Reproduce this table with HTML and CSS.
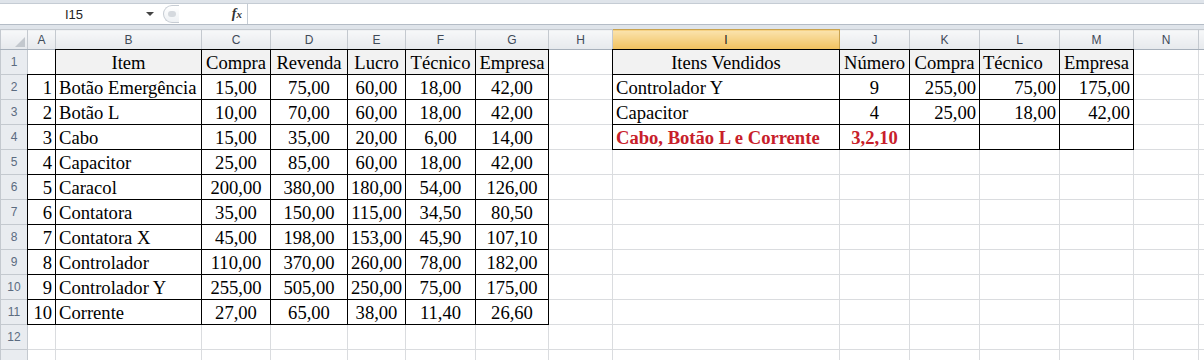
FILE: index.html
```html
<!DOCTYPE html>
<html lang="pt">
<head>
    <meta charset="UTF-8">
    <title>Vendas</title>
    <link rel="stylesheet" href="styles.css">
</head>
<body>

<div class="formula-bar">
    <div class="bar-row">
        <div class="name-box">
            <span class="ref">I15</span>
            <span class="drop"></span>
        </div>
        <div class="bar-tools">
            <span class="grip"><span class="dot"></span></span>
            <span class="fx"><i>f</i><i class="x">x</i></span>
        </div>
        <div class="formula"></div>
    </div>
</div>

<table class="sheet">
    <colgroup>
        <col style="width:27px">
        <col style="width:28px">
        <col style="width:146px">
        <col style="width:69px">
        <col style="width:77px">
        <col style="width:58px">
        <col style="width:70px">
        <col style="width:73px">
        <col style="width:64px">
        <col style="width:227px">
        <col style="width:70px">
        <col style="width:70px">
        <col style="width:80px">
        <col style="width:74px">
        <col style="width:65px">
        <col style="width:80px">
    </colgroup>
    <tr class="col-heads">
        <th class="corner"><svg width="12" height="12" viewBox="0 0 12 12"><polygon points="11,1 11,11 1,11" fill="#c3c8ce"/></svg></th>
        <th>A</th><th>B</th><th>C</th><th>D</th><th>E</th><th>F</th><th>G</th><th>H</th>
        <th class="active">I</th><th>J</th><th>K</th><th>L</th><th>M</th><th>N</th><th></th>
    </tr>
    <tr>
        <th class="row-num">1</th>
        <td></td>
        <td class="b hd c">Item</td>
        <td class="b hd c">Compra</td>
        <td class="b hd c">Revenda</td>
        <td class="b hd c">Lucro</td>
        <td class="b hd c">Técnico</td>
        <td class="b hd c">Empresa</td>
        <td></td>
        <td class="b hd c">Itens Vendidos</td>
        <td class="b hd c">Número</td>
        <td class="b hd c">Compra</td>
        <td class="b hd">Técnico</td>
        <td class="b hd c">Empresa</td>
        <td></td><td></td>
    </tr>
    <tr>
        <th class="row-num">2</th>
        <td class="b r">1</td><td class="b">Botão Emergência</td>
        <td class="b c">15,00</td><td class="b c">75,00</td><td class="b c">60,00</td><td class="b c">18,00</td><td class="b c">42,00</td>
        <td></td>
        <td class="b">Controlador Y</td><td class="b c">9</td>
        <td class="b r">255,00</td><td class="b r">75,00</td><td class="b r">175,00</td>
        <td></td><td></td>
    </tr>
    <tr>
        <th class="row-num">3</th>
        <td class="b r">2</td><td class="b">Botão L</td>
        <td class="b c">10,00</td><td class="b c">70,00</td><td class="b c">60,00</td><td class="b c">18,00</td><td class="b c">42,00</td>
        <td></td>
        <td class="b">Capacitor</td><td class="b c">4</td>
        <td class="b r">25,00</td><td class="b r">18,00</td><td class="b r">42,00</td>
        <td></td><td></td>
    </tr>
    <tr>
        <th class="row-num">4</th>
        <td class="b r">3</td><td class="b">Cabo</td>
        <td class="b c">15,00</td><td class="b c">35,00</td><td class="b c">20,00</td><td class="b c">6,00</td><td class="b c">14,00</td>
        <td></td>
        <td class="b red">Cabo, Botão L e Corrente</td><td class="b c red">3,2,10</td>
        <td class="b"></td><td class="b"></td><td class="b"></td>
        <td></td><td></td>
    </tr>
    <tr>
        <th class="row-num">5</th>
        <td class="b r">4</td><td class="b">Capacitor</td>
        <td class="b c">25,00</td><td class="b c">85,00</td><td class="b c">60,00</td><td class="b c">18,00</td><td class="b c">42,00</td>
        <td></td><td></td><td></td><td></td><td></td><td></td><td></td><td></td>
    </tr>
    <tr>
        <th class="row-num">6</th>
        <td class="b r">5</td><td class="b">Caracol</td>
        <td class="b c">200,00</td><td class="b c">380,00</td><td class="b c">180,00</td><td class="b c">54,00</td><td class="b c">126,00</td>
        <td></td><td></td><td></td><td></td><td></td><td></td><td></td><td></td>
    </tr>
    <tr>
        <th class="row-num">7</th>
        <td class="b r">6</td><td class="b">Contatora</td>
        <td class="b c">35,00</td><td class="b c">150,00</td><td class="b c">115,00</td><td class="b c">34,50</td><td class="b c">80,50</td>
        <td></td><td></td><td></td><td></td><td></td><td></td><td></td><td></td>
    </tr>
    <tr>
        <th class="row-num">8</th>
        <td class="b r">7</td><td class="b">Contatora X</td>
        <td class="b c">45,00</td><td class="b c">198,00</td><td class="b c">153,00</td><td class="b c">45,90</td><td class="b c">107,10</td>
        <td></td><td></td><td></td><td></td><td></td><td></td><td></td><td></td>
    </tr>
    <tr>
        <th class="row-num">9</th>
        <td class="b r">8</td><td class="b">Controlador</td>
        <td class="b c">110,00</td><td class="b c">370,00</td><td class="b c">260,00</td><td class="b c">78,00</td><td class="b c">182,00</td>
        <td></td><td></td><td></td><td></td><td></td><td></td><td></td><td></td>
    </tr>
    <tr>
        <th class="row-num">10</th>
        <td class="b r">9</td><td class="b">Controlador Y</td>
        <td class="b c">255,00</td><td class="b c">505,00</td><td class="b c">250,00</td><td class="b c">75,00</td><td class="b c">175,00</td>
        <td></td><td></td><td></td><td></td><td></td><td></td><td></td><td></td>
    </tr>
    <tr>
        <th class="row-num">11</th>
        <td class="b r">10</td><td class="b">Corrente</td>
        <td class="b c">27,00</td><td class="b c">65,00</td><td class="b c">38,00</td><td class="b c">11,40</td><td class="b c">26,60</td>
        <td></td><td></td><td></td><td></td><td></td><td></td><td></td><td></td>
    </tr>
    <tr>
        <th class="row-num">12</th>
        <td></td><td></td><td></td><td></td><td></td><td></td><td></td><td></td><td></td><td></td><td></td><td></td><td></td><td></td><td></td>
    </tr>
    <tr>
        <th class="row-num"></th>
        <td></td><td></td><td></td><td></td><td></td><td></td><td></td><td></td><td></td><td></td><td></td><td></td><td></td><td></td><td></td>
    </tr>
</table>

</body>
</html>
```

FILE: styles.css
```css
* {
    box-sizing: border-box;
}
body {
    margin: 0;
    width: 1204px;
    height: 360px;
    overflow: hidden;
    background: #ffffff;
    font-family: "Liberation Serif", "DejaVu Serif", serif;
}

/* formula bar */
.formula-bar {
    height: 29px;
    padding-top: 3px;
    background: #dfe4ea;
}
.bar-row {
    display: flex;
    height: 22px;
    background: #ffffff;
    border-top: 1px solid #c5ccd4;
    border-bottom: 1px solid #b4bcc6;
}
.name-box {
    width: 160px;
    display: flex;
    align-items: center;
    font: 13px "Liberation Sans", Arial, sans-serif;
    color: #222;
}
.name-box .ref {
    width: 146px;
    padding-left: 2px;
    text-align: center;
}
.name-box .drop {
    width: 0;
    height: 0;
    border-left: 4px solid transparent;
    border-right: 4px solid transparent;
    border-top: 4px solid #444;
}
.bar-tools {
    width: 87px;
    display: flex;
    align-items: center;
    justify-content: space-between;
    padding-right: 5px;
}
.grip {
    width: 16px;
    height: 18px;
    margin-left: 3px;
    border: 1px solid #c6ccd3;
    border-right: none;
    border-radius: 9px 0 0 9px;
    display: flex;
    align-items: center;
    justify-content: center;
    background: linear-gradient(#ffffff, #eef1f4);
}
.grip .dot {
    width: 8px;
    height: 6px;
    border-radius: 4px;
    background: #d5d9de;
}
.fx {
    font-family: "Liberation Serif", serif;
    font-weight: bold;
    font-size: 14px;
    color: #333;
}
.fx .x {
    font-size: 11px;
}
.formula {
    flex: 1;
    border-left: 1px solid #c5ccd4;
}

/* grid */
.sheet {
    border-collapse: collapse;
    table-layout: fixed;
    width: 1278px;
}
.sheet th {
    font-family: "Liberation Sans", Arial, sans-serif;
    font-size: 12px;
    font-weight: normal;
    line-height: 14px;
    color: #404a58;
    padding: 0;
}
.col-heads th {
    height: 20px;
    background: linear-gradient(#f7f8f9, #e6e9ed);
    border: 1px solid #c4c9cf;
    border-bottom-color: #a7b0bb;
}
.col-heads th.active {
    background: linear-gradient(#fbe3ad, #f1c15e);
    color: #222;
    border-color: #c8a24f;
}
.col-heads th.corner svg {
    display: block;
    margin: 5px 1px 0 auto;
}
.row-num {
    background: #e9ecf0;
    border: 1px solid #c4c9cf;
    color: #5b6b80 !important;
}
.sheet tr {
    height: 25px;
}
.sheet tr.col-heads {
    height: 20px;
}
.sheet td {
    border: 1px solid #dadcdf;
    padding: 0 3px 1px;
    font-family: "Liberation Serif", "DejaVu Serif", serif;
    font-size: 18.6px;
    line-height: 20px;
    vertical-align: bottom;
    white-space: nowrap;
    overflow: hidden;
    color: #000;
}

/* cell formats; double beats solid when borders collapse, and renders solid at 1px */
.sheet td.b {
    border: 1px double #000;
}
.sheet td.hd {
    background: #f2f2f2;
}
.sheet td.c {
    text-align: center;
}
.sheet td.r {
    text-align: right;
}
.sheet td.red {
    color: #c8202a;
    font-weight: bold;
}
```
